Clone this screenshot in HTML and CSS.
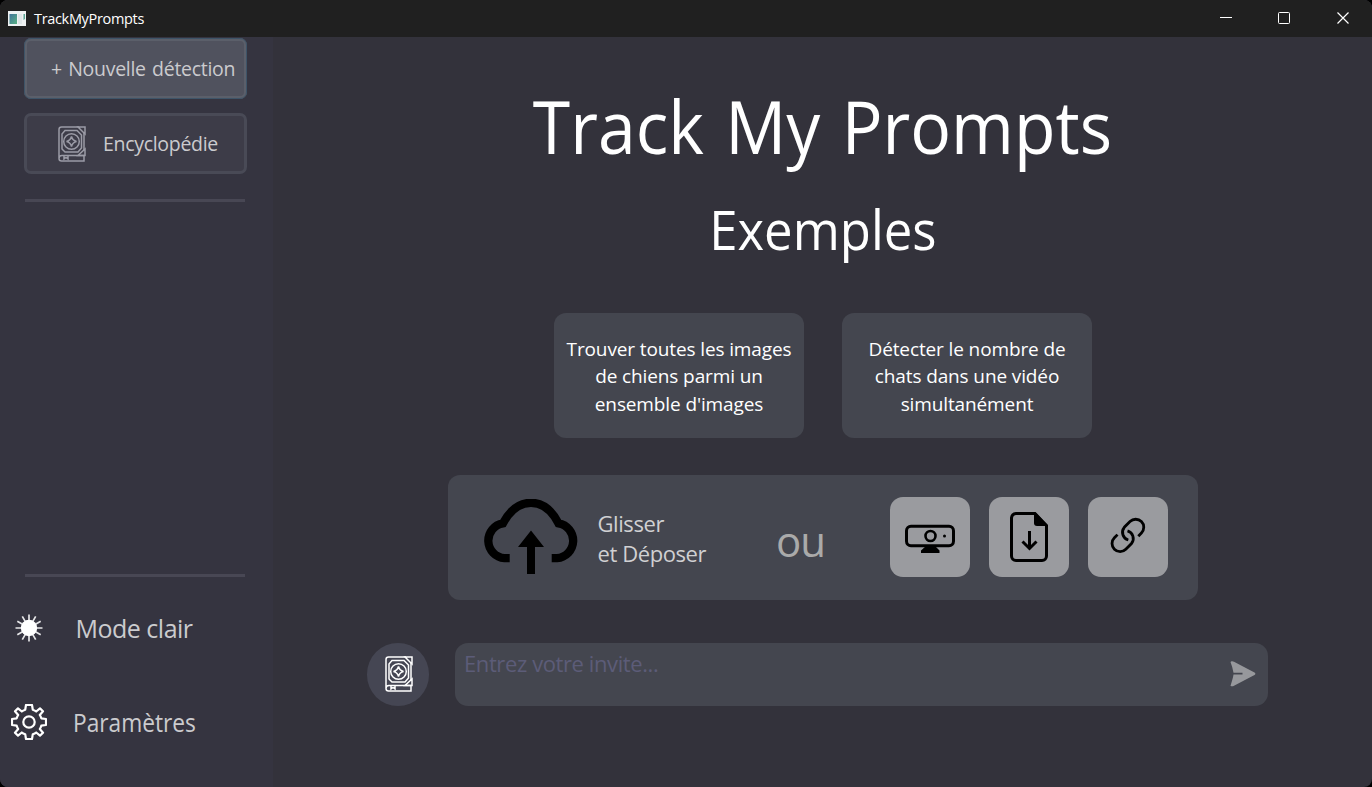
FILE: index.html
```html
<!DOCTYPE html>
<html lang="fr">
<head>
<meta charset="utf-8">
<title>TrackMyPrompts</title>
<link rel="stylesheet" href="styles.css">
</head>
<body>
<svg class="sprite" width="0" height="0">
  <symbol id="book" viewBox="0 0 28 36">
    <g fill="none" stroke="currentColor" stroke-width="1.5">
      <path d="M21 1H3.500Q1 1 1 3.500V32.500Q1 35 3.500 35H26V29.500H4Q1 29.500 1 32.500M26 7V24"/>
      <path d="M20 1H27V8ZM27 23V29.500H20Z"/>
      <path d="M7 4.500H19L23.500 9V22L20 26H7L4 23V8Z"/>
      <circle cx="13.500" cy="15.500" r="7.800"/>
      <path d="M13.500 10.500Q14.500 14.500 18.500 15.500Q14.500 16.500 13.500 20.500Q12.500 16.500 8.500 15.500Q12.500 14.500 13.500 10.500Z"/>
      <path d="M6 29.500V33L8 31.500L10 33V29.500"/>
    </g>
  </symbol>
</svg>
<div class="window">
  <header class="titlebar">
    <svg class="app-icon" width="18" height="15" viewBox="0 0 18 15"><defs><linearGradient id="g" x1="0" y1="0" x2="1" y2="1"><stop offset="0" stop-color="#3f7299"/><stop offset="1" stop-color="#59b183"/></linearGradient></defs><path fill="#eef1f2" d="M0 0H18V15H0Z"/><path fill="url(#g)" d="M1.500 3H9V13H1.500Z"/><path fill="#dfe6e8" d="M10 3H14V13H10Z"/><path fill="#5aa594" d="M15.500 3H17V8L15.500 9Z"/></svg>
    <span class="app-name">TrackMyPrompts</span>
    <svg class="controls" width="132" height="14" viewBox="0 0 132 14" fill="none" stroke="#fff" stroke-width="1"><path d="M0 6.500H12"/><rect x="58.500" y="1.500" width="11" height="11" rx="1"/><path d="M117.500 1.500L128.500 12.500M128.500 1.500L117.500 12.500" stroke-width="1.200"/></svg>
  </header>
  <div class="body">
    <aside class="sidebar">
      <button class="side-btn active"><span class="t-new">+ Nouvelle détection</span></button>
      <button class="side-btn ency"><svg class="book-dim" width="28" height="36"><use href="#book"/></svg><span class="t-ency">Encyclopédie</span></button>
      <hr class="rule">
      <hr class="rule low">
      <div class="side-link mode">
        <svg width="36" height="36" viewBox="-18 -18 36 36"><path stroke="#e6e6e8" stroke-width="1.700" d="M0-13.500V13.500M-13.500 0H13.500M-6.700-11.700L6.700 11.700M-11.700-6.700L11.700 6.700M6.700-11.700L-6.700 11.700M11.700-6.700L-11.700 6.700"/><circle r="8.200" fill="#fff"/></svg>
        <span>Mode clair</span>
      </div>
      <div class="side-link params">
        <svg width="36" height="36" viewBox="-18 -18 36 36" fill="none" stroke="#fff" stroke-width="2.200" stroke-linejoin="round"><circle r="5.700"/><path d="M-3-17H3L3.800-12.300Q6-11.600 7.200-10.500L11-13.600L14-10.800L10.800-7Q11.900-5.400 12.300-3.700L17-3V3L12.300 3.700Q11.900 5.400 10.800 7L14 10.800L11 13.600L7.200 10.500Q6 11.600 3.800 12.300L3 17H-3L-3.800 12.300Q-6 11.600-7.200 10.500L-11 13.600L-14 10.800L-10.800 7Q-11.900 5.400-12.300 3.700L-17 3V-3L-12.300-3.700Q-11.900-5.400-10.800-7L-14-10.800L-11-13.600L-7.200-10.500Q-6-11.600-3.800-12.300Z"/></svg>
        <span class="t-params">Paramètres</span>
      </div>
    </aside>
    <main class="main">
      <h1 class="title">Track My Prompts</h1>
      <h2 class="subtitle">Exemples</h2>
      <div class="examples">
        <div class="card"><p>Trouver toutes les images<br>de chiens parmi un<br>ensemble d'images</p></div>
        <div class="card"><p>Détecter le nombre de<br>chats dans une vidéo<br>simultanément</p></div>
      </div>
      <section class="drop">
        <svg class="cloud" width="96" height="76" viewBox="0 0 96 76"><path d="M26.700 59.200H21.500A17.600 17.600 0 0 1 20 24.300Q31 3.800 48 3.800T75.500 24.300A17.600 17.600 0 0 1 74 59.200H68.700" fill="none" stroke="#000" stroke-width="8.300"/><path d="M48 31.500L61 48H52V75H44V48H35Z"/></svg>
        <p class="drop-text">Glisser<br>et Déposer</p>
        <span class="or">ou</span>
        <div class="sources">
          <button class="source"><svg width="50" height="50" viewBox="0 0 50 50"><rect x="1.500" y="14.300" width="47" height="19.500" rx="4.500" fill="none" stroke="#000" stroke-width="3"/><circle cx="25.500" cy="24" r="5" fill="none" stroke="#000" stroke-width="2.600"/><circle cx="39.500" cy="24" r="1.500"/><path d="M21 34H30L34.500 38.500V41H16V38.500Z"/></svg></button>
          <button class="source"><svg width="50" height="50" viewBox="0 0 50 50"><path d="M25.500 1.500H12A5 5 0 0 0 7.500 6V44A4.500 4.500 0 0 0 12 48.500H38A4.500 4.500 0 0 0 42.500 44V13.500L31 1.500Z" fill="none" stroke="#000" stroke-width="3"/><path d="M30 1H32L43.500 13V14H33Q30 14 30 11Z"/><path d="M25.500 19V36M18.500 29.500L25.500 36.500L32.500 29.500" fill="none" stroke="#000" stroke-width="3"/></svg></button>
          <button class="source"><svg width="50" height="50" viewBox="0 0 50 50" fill="none" stroke="#000" stroke-width="2.800"><path d="M25.300 28A8 8 0 0 1 21.300 15.300L27 9.600A8 8 0 0 1 38.400 21L35.300 24.200"/><path d="M24.500 18.800A8 8 0 0 1 28.500 31.500L22.800 37.200A8 8 0 0 1 11.400 25.800L14.500 22.600"/></svg></button>
        </div>
      </section>
      <section class="prompt">
        <button class="round"><svg class="book" width="28" height="36"><use href="#book"/></svg></button>
        <div class="field"><span class="placeholder">Entrez votre invite...</span><svg class="send" width="26" height="26" viewBox="0 0 26 26"><path fill="#97989c" d="M1.500.300Q2.500 0 4 .700L24.500 11.500Q26.200 12.700 24.500 14L4 24.800Q2 25.800.500 24.800Q3 17 3.500 13.500H12.500V11.800H3.500Q2.500 6 .500 1Z"/></svg></div>
      </section>
    </main>
  </div>
</div>
</body>
</html>
```
FILE: styles.css
```css
* { box-sizing: border-box; }
body { margin: 0; background: #000; font-family: "Open Sans", "Noto Sans", sans-serif; color: #fff; }
button { font: inherit; color: inherit; border: 0; padding: 0; }
.sprite { display: block; position: absolute; }
.window { width: 1372px; height: 787px; display: flex; flex-direction: column; border-radius: 8px; overflow: hidden; background: #33323b; white-space: nowrap; }
.titlebar { height: 37px; flex: none; background: #202020; display: flex; align-items: center; padding: 0 20px 1px 8px; }
.app-name { margin-left: 8px; font-size: 14.5px; letter-spacing: -0.33px; }
.controls { margin-left: auto; }
.body { flex: 1; display: flex; }

.sidebar { width: 273px; background: #353440; display: flex; flex-direction: column; color: #cbcbce; padding: 1px 0 0; }
.side-btn { width: 223px; height: 61px; margin-left: 24px; border: 3px solid #494a56; border-radius: 7px; background: #3d3c48; display: flex; align-items: center; font-size: 19.5px; }
.side-btn.active { background: #50525e; border-color: #5b5f6a; outline: 1px solid #3e5468; outline-offset: -1px; padding-left: 24px; }
.side-btn.ency { margin-top: 14px; padding-left: 31px; gap: 17px; }
.t-new { letter-spacing: -0.28px; word-spacing: 1.5px; }
.t-ency { letter-spacing: -0.3px; }
.book-dim { color: #9b9ba6; }
.book { color: #fff; margin-left: 2px; }
.rule { width: 220px; height: 3px; border: 0; background: #484754; margin: 25px 0 0 25px; }
.rule.low { margin-top: 372px; }
.side-link { display: flex; align-items: center; padding-left: 11px; height: 36px; }
.mode { margin-top: 33px; gap: 28.5px; font-size: 25px; letter-spacing: -0.5px; }
.params { margin-top: 58px; gap: 25.5px; font-size: 24.7px; }
.t-params { transform: scaleX(0.92); transform-origin: left; }

.main { flex: 1; display: flex; flex-direction: column; align-items: center; padding-top: 39px; }
.title { margin: 0; font-weight: 400; font-size: 73px; line-height: 100px; word-spacing: 4px; transform: scaleX(0.93); }
.subtitle { margin: 16px 0 0; font-weight: 400; font-size: 55px; line-height: 73px; transform: scaleX(0.925); }
.examples { display: flex; gap: 38px; margin: 48px 0 0 1px; }
.card { width: 250px; height: 125px; border-radius: 12px; background: #44464f; display: flex; align-items: center; justify-content: center; text-align: center; font-size: 19px; line-height: 27.5px; letter-spacing: -0.12px; }
.card p { margin: 3px 0 0; }
.drop { width: 750px; height: 125px; margin-top: 36.5px; border-radius: 12px; background: #44464f; display: flex; align-items: center; padding: 0 30px 0 35px; color: #d0d0d2; }
.drop-text { margin: 1px 0 0 19px; font-size: 22px; line-height: 30px; letter-spacing: -0.42px; }
.or { margin: 6px 0 0 70px; font-size: 42px; color: #aaaaaa; letter-spacing: -1px; }
.sources { display: flex; gap: 18.75px; margin-left: auto; }
.source { width: 80px; height: 80px; border-radius: 13px; background: #9a9b9f; display: flex; align-items: center; justify-content: center; }
.prompt { display: flex; gap: 26px; margin: 43.5px 11px 0 0; width: 901px; }
.round { width: 62.5px; height: 62.5px; border-radius: 50%; background: #454653; display: flex; align-items: center; justify-content: center; }
.field { flex: 1; height: 62.5px; border-radius: 13px; background: #44464f; display: flex; justify-content: space-between; padding: 0 12px 0 9px; }
.placeholder { font-size: 22px; line-height: 41px; letter-spacing: -0.4px; color: #5c5c78; }
.send { align-self: center; }
```
